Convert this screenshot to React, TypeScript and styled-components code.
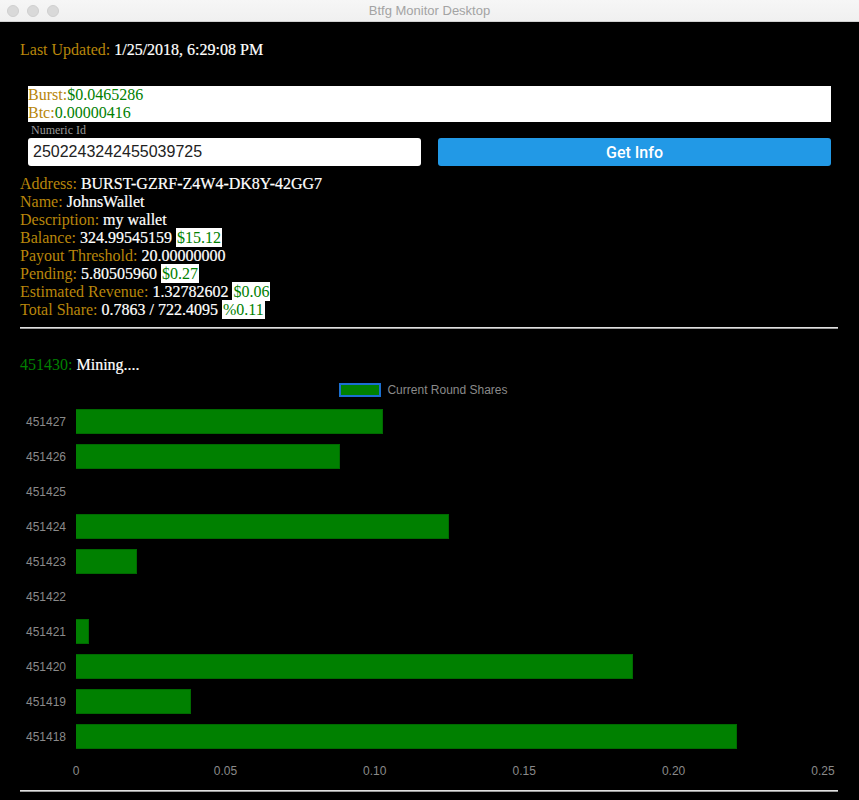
import React from 'react';
import styled, { createGlobalStyle } from 'styled-components';

const GlobalStyle = createGlobalStyle`
	html, body {
		margin: 0;
		padding: 0;
		background: #000;
	}
	body {
		font-family: "Liberation Serif", "Times New Roman", serif;
	}
`;

const rounds = [
  { id: '451427', shares: 0.1027 },
  { id: '451426', shares: 0.0883 },
  { id: '451425', shares: 0 },
  { id: '451424', shares: 0.1248 },
  { id: '451423', shares: 0.0204 },
  { id: '451422', shares: 0 },
  { id: '451421', shares: 0.0043 },
  { id: '451420', shares: 0.1864 },
  { id: '451419', shares: 0.0385 },
  { id: '451418', shares: 0.2212 }
];

const ticks = ['0', '0.05', '0.10', '0.15', '0.20', '0.25'];
const maxShare = 0.25;

const Window = styled.div`
	width: 859px;
	height: 800px;
	background: #000;
	display: flex;
	flex-direction: column;
	overflow: hidden;
`;

const TitleBar = styled.div`
	height: 21px;
	flex: 0 0 21px;
	background: linear-gradient(#f6f6f6, #f0f0f0);
	border-bottom: 1px solid #d1d1d1;
	display: flex;
	align-items: center;
	padding: 0 7px;
`;

const Light = styled.span`
	width: 12px;
	height: 12px;
	border-radius: 50%;
	background: #d9d9d9;
	border: 0.5px solid #cfcfcf;
	margin-right: 8px;
	box-sizing: border-box;
`;

const Title = styled.div`
	flex: 1;
	text-align: center;
	margin-left: -60px;
	font-family: "Liberation Sans", Arial, sans-serif;
	font-size: 13px;
	color: #a3a3a3;
`;

const Content = styled.div`
	padding: 19px 20px 0 20px;
	color: #fff;
	font-size: 16px;
	line-height: 18px;
`;

const Label = styled.span`
	color: #b8860b;
`;

const Value = styled.span`
	color: #fff;
	-webkit-text-stroke: 0.2px #fff;
`;

const Money = styled.span<{ $boxed?: boolean }>`
	color: #008000;
	background: ${p => (p.$boxed ? '#fff' : 'transparent')};
	padding: ${p => (p.$boxed ? '1px 1px' : '0')};
`;

const UpdatedLine = styled.div`
	margin-bottom: 27px;
`;

const Inset = styled.div`
	padding: 0 8px;
`;

const PriceBox = styled.div`
	background: #fff;
	line-height: 18px;
`;

const FieldLabel = styled.div`
	font-size: 12px;
	line-height: 14px;
	color: #9a9a9a;
	padding: 1px 0 1px 3px;
`;

const FormRow = styled.div`
	display: grid;
	grid-template-columns: 1fr 1fr;
	gap: 17px;
`;

const IdInput = styled.input`
	height: 28px;
	box-sizing: border-box;
	border: none;
	border-radius: 3px;
	background: #fff;
	padding: 0 5px;
	font-family: "Liberation Sans", Arial, sans-serif;
	font-size: 16px;
	color: #222;
	outline: none;
`;

const InfoButton = styled.button`
	height: 28px;
	border: none;
	border-radius: 3px;
	background: #2299e6;
	color: #fff;
	font-family: Roboto, "Liberation Sans", sans-serif;
	font-weight: 500;
	font-size: 16px;
	cursor: pointer;
`;

const Details = styled.div`
	margin-top: 9px;
`;

const Rule = styled.hr`
	margin: 8px 1px 0 0;
	border: none;
	border-top: 1px solid #e0e0e0;
	border-bottom: 1px solid #9a9a9a;
	height: 0;
`;

const BlockLine = styled.div`
	margin-top: 27px;
`;

const Chart = styled.div`
	font-family: "Liberation Sans", Arial, sans-serif;
	font-size: 12px;
	color: #8a8a8a;
	margin-top: 9px;
`;

const Legend = styled.div`
	display: flex;
	justify-content: center;
	align-items: center;
	gap: 6px;
	height: 14px;
	line-height: 14px;
	margin-left: -12px;
	margin-bottom: 7px;
`;

const LegendSwatch = styled.span`
	width: 42px;
	height: 14px;
	box-sizing: border-box;
	background: #008000;
	border: 2px solid #1b6fd1;
`;

const Row = styled.div`
	display: grid;
	grid-template-columns: 56px 747px;
	height: 35px;
	align-items: center;
`;

const RowLabel = styled.div`
	text-align: right;
	padding-right: 10px;
`;

const Track = styled.div`
	height: 25px;
`;

const Bar = styled.div`
	height: 25px;
	box-sizing: border-box;
	background: #008000;
	border: 1px solid #006a00;
	border-left: none;
`;

const Axis = styled.div`
	display: flex;
	justify-content: space-between;
	margin-left: 56px;
	width: 747px;
	height: 14px;
	line-height: 14px;
	margin-top: 10px;
`;

const Tick = styled.div`
	width: 0;
	display: flex;
	justify-content: center;
	white-space: nowrap;
`;

const BottomRule = styled(Rule)`
	margin-top: 12px;
`;

function App() {
	return (
		<Window>
			<GlobalStyle />
			<TitleBar>
				<Light />
				<Light />
				<Light />
				<Title>Btfg Monitor Desktop</Title>
			</TitleBar>
			<Content>
				<UpdatedLine>
					<Label>Last Updated: </Label>
					<Value>1/25/2018, 6:29:08 PM</Value>
				</UpdatedLine>
				<Inset>
					<PriceBox>
						<div><Label>Burst:</Label><Money>$0.0465286</Money></div>
						<div><Label>Btc:</Label><Money>0.00000416</Money></div>
					</PriceBox>
					<FieldLabel>Numeric Id</FieldLabel>
					<FormRow>
						<IdInput defaultValue="2502243242455039725" />
						<InfoButton>Get Info</InfoButton>
					</FormRow>
				</Inset>
				<Details>
					<div><Label>Address: </Label><Value>BURST-GZRF-Z4W4-DK8Y-42GG7</Value></div>
					<div><Label>Name: </Label><Value>JohnsWallet</Value></div>
					<div><Label>Description: </Label><Value>my wallet</Value></div>
					<div><Label>Balance: </Label><Value>324.99545159 </Value><Money $boxed>$15.12</Money></div>
					<div><Label>Payout Threshold: </Label><Value>20.00000000</Value></div>
					<div><Label>Pending: </Label><Value>5.80505960 </Value><Money $boxed>$0.27</Money></div>
					<div><Label>Estimated Revenue: </Label><Value>1.32782602 </Value><Money $boxed>$0.06</Money></div>
					<div><Label>Total Share: </Label><Value>0.7863 / 722.4095 </Value><Money $boxed>%0.11</Money></div>
				</Details>
				<Rule />
				<BlockLine>
					<Money>451430: </Money>
					<Value>Mining....</Value>
				</BlockLine>
				<Chart>
					<Legend>
						<LegendSwatch />
						<span>Current Round Shares</span>
					</Legend>
					{rounds.map(r => (
						<Row key={r.id}>
							<RowLabel>{r.id}</RowLabel>
							<Track>
								{r.shares > 0 && <Bar style={{ width: `${(r.shares / maxShare) * 100}%` }} />}
							</Track>
						</Row>
					))}
					<Axis>
						{ticks.map(t => <Tick key={t}>{t}</Tick>)}
					</Axis>
				</Chart>
				<BottomRule />
			</Content>
		</Window>
	);
}

export default App;
